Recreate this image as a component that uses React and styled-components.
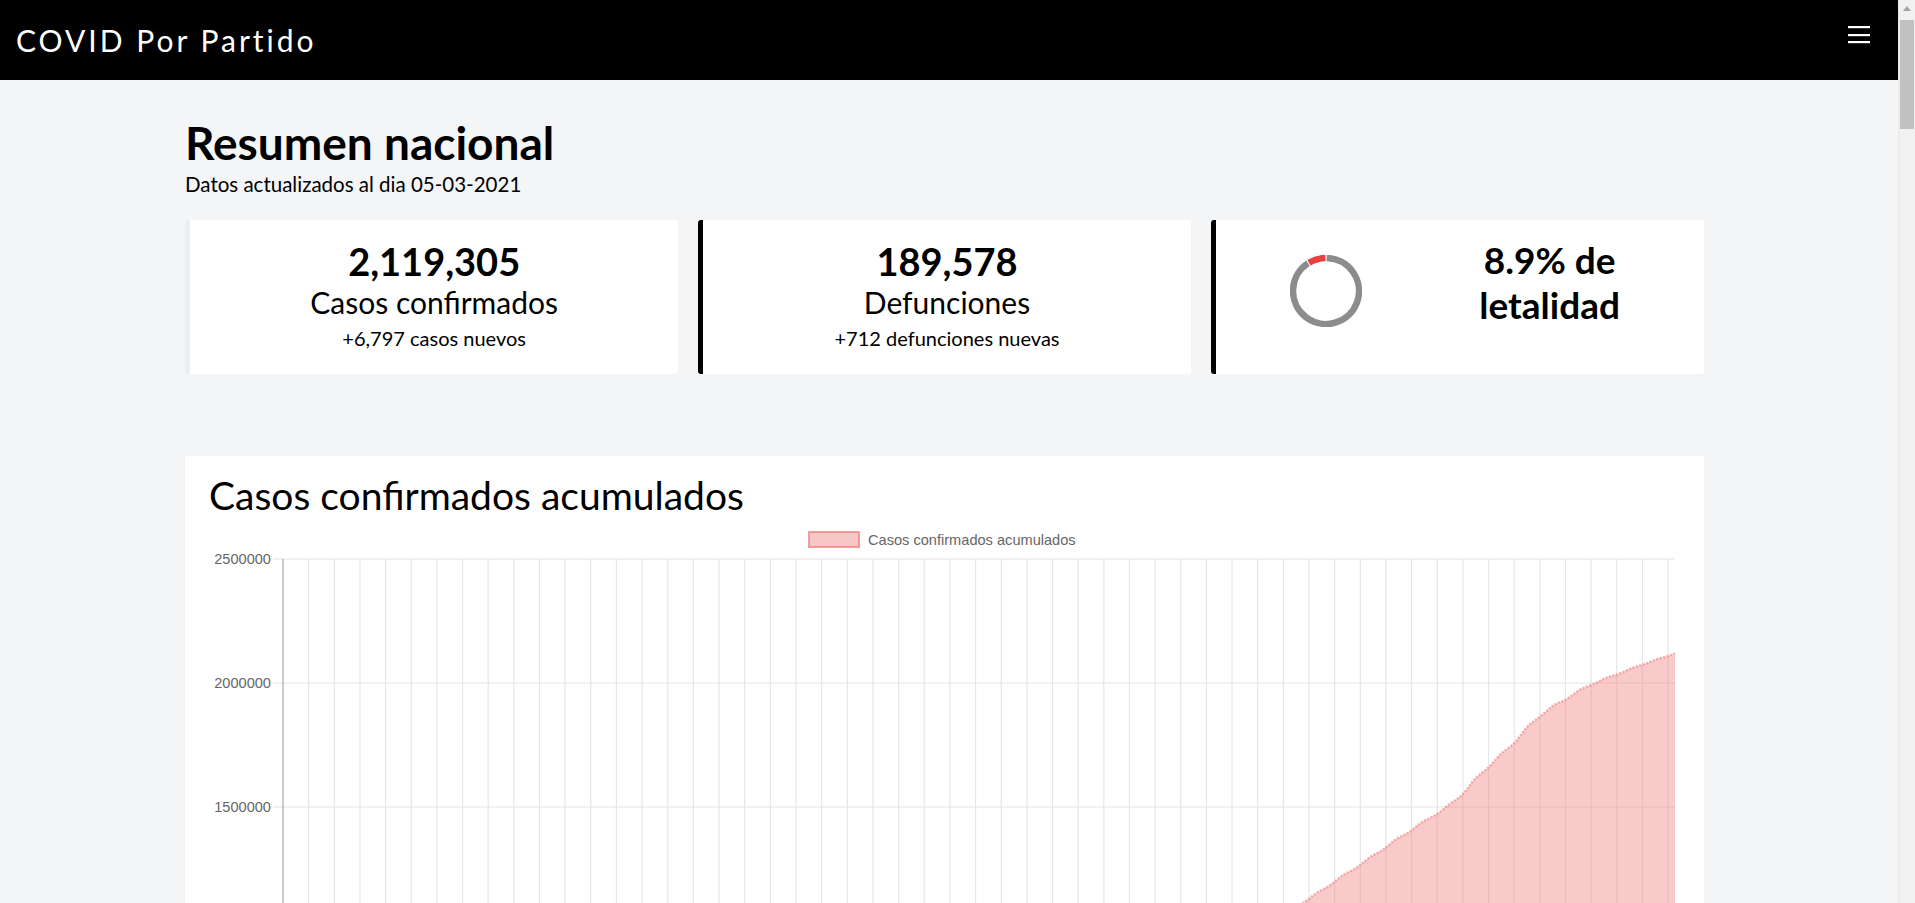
import React from "react";
import styled, { createGlobalStyle } from "styled-components";

const GlobalStyle = createGlobalStyle`
  html, body { margin: 0; padding: 0; }
  body {
    background: #f4f5f7;
    font-family: "Lato", "Open Sans", sans-serif;
    color: #000;
    padding-right: 17px;
  }
  * { box-sizing: border-box; }
`;

const ScrollTrack = styled.div`
  position: fixed;
  top: 0;
  right: 0;
  width: 17px;
  height: 100vh;
  background: #f1f1f1;
  border-left: 1px solid #e8e8e8;
  z-index: 10;
`;

const ScrollArrow = styled.div`
  width: 0;
  height: 0;
  margin: 6px auto 0;
  border-left: 4px solid transparent;
  border-right: 4px solid transparent;
  border-bottom: 5px solid #a3a3a3;
`;

const ScrollThumb = styled.div`
  margin: 9px 1px 0 1px;
  height: 109px;
  background: #c1c1c1;
`;

const NavBar = styled.nav`
  height: 80px;
  background: #000;
  display: flex;
  align-items: center;
  justify-content: space-between;
  padding: 0 28px 0 16px;
`;

const Brand = styled.a`
  color: #fff;
  font-size: 30px;
  font-weight: 400;
  letter-spacing: 3px;
  text-decoration: none;
`;

const Toggler = styled.button`
  background: none;
  border: 0;
  padding: 0;
  width: 22px;
  height: 30px;
  display: block;
  cursor: pointer;
`;

const Main = styled.main`
  width: 1519px;
  margin: 0 0 0 calc(50% - 764px);
  padding: 36px 0 60px;
`;

const Title = styled.h1`
  margin: 0;
  font-size: 46px;
  line-height: 54px;
  font-weight: 700;
  letter-spacing: 0;
`;

const Subtitle = styled.p`
  margin: 2px 0 0;
  font-size: 20.5px;
  line-height: 24px;
`;

const CardGrid = styled.section`
  display: grid;
  grid-template-columns: repeat(3, 1fr);
  gap: 19.5px;
  margin-top: 24px;
`;

const StatCard = styled.div`
  background: #fff;
  border-left: 5px solid ${(p) => p.$accent};
  border-radius: 3px;
  padding: 19px 12px;
  text-align: center;
  min-height: 154px;
`;

const BigNumber = styled.div`
  font-size: 38px;
  line-height: 44px;
  font-weight: 700;
`;

const StatLabel = styled.div`
  font-size: 30px;
  line-height: 38px;
`;

const StatSub = styled.div`
  font-size: 20px;
  line-height: 34px;
`;

const RateCard = styled.div`
  background: #fff;
  border-left: 5px solid #000;
  border-radius: 3px;
  padding: 17px 40px 17px 0;
  display: grid;
  grid-template-columns: 220px 228px;
  align-items: start;
`;

const DonutBox = styled.div`
  display: flex;
  justify-content: center;
  margin-top: 18px;
`;

const RateText = styled.div`
  font-size: 37px;
  line-height: 45px;
  font-weight: 700;
  text-align: center;
`;

const ChartCard = styled.section`
  background: #fff;
  margin-top: 82px;
  padding: 16px 24px 30px;
`;

const ChartTitle = styled.h2`
  margin: 0;
  font-size: 39px;
  line-height: 46px;
  font-weight: 400;
`;

const ChartSvg = styled.svg`
  display: block;
  margin-top: 6px;
`;

function Hamburger() {
  return (
    <svg width="22" height="30" viewBox="0 0 22 30">
      <rect x="0" y="1" width="22" height="2.2" fill="#fff" />
      <rect x="0" y="9" width="22" height="2.2" fill="#fff" />
      <rect x="0" y="16" width="22" height="2.2" fill="#fff" />
    </svg>
  );
}

function polar(cx, cy, r, deg) {
  const a = (deg * Math.PI) / 180;
  return [cx + r * Math.sin(a), cy - r * Math.cos(a)];
}

function arc(cx, cy, r, a0, a1) {
  const [x0, y0] = polar(cx, cy, r, a0);
  const [x1, y1] = polar(cx, cy, r, a1);
  const large = a1 - a0 > 180 ? 1 : 0;
  return `M${x0.toFixed(2)},${y0.toFixed(2)} A${r},${r} 0 ${large} 1 ${x1.toFixed(2)},${y1.toFixed(2)}`;
}

function Donut({ pct }) {
  const redStart = 360 - pct * 3.6;
  return (
    <svg width="72" height="72" viewBox="0 0 72 72">
      <path d={arc(36, 36, 33, 1, redStart - 1)} stroke="#8c8c8c" strokeWidth="6.5" fill="none" />
      <path d={arc(36, 36, 33, redStart + 1, 359)} stroke="#e8403e" strokeWidth="6.5" fill="none" />
    </svg>
  );
}

const controls = [
  [0, 0], [33, 1200], [63, 20000], [94, 93000], [124, 232000], [155, 425000],
  [186, 600000], [216, 743000], [247, 930000], [272, 1121000], [280, 1205600],
  [287, 1274000], [295, 1358900], [301, 1419000], [308, 1488000], [311, 1508000],
  [316, 1596800], [321, 1677000], [325, 1722000], [329, 1790000], [335, 1891000],
  [339, 1911000], [343, 1960000], [349, 2004000], [356, 2044000], [363, 2085000],
  [369, 2113000], [370, 2119305],
];

function base(d) {
  for (let i = 0; i < controls.length - 1; i++) {
    const [d0, v0] = controls[i];
    const [d1, v1] = controls[i + 1];
    if (d >= d0 && d <= d1) {
      return v0 + ((v1 - v0) * (d - d0)) / (d1 - d0);
    }
  }
  return controls[controls.length - 1][1];
}

const DAYS = 371;
const smooth = Array.from({ length: DAYS }, (_, d) => {
  let s = 0;
  let n = 0;
  for (let k = -4; k <= 4; k++) {
    const j = Math.min(370, Math.max(0, d + k));
    s += base(j);
    n++;
  }
  return d > 366 ? base(d) : s / n;
});
const data = smooth.map((v, d) => {
  const slope = smooth[Math.min(d + 1, 370)] - smooth[d];
  return d > 366 ? v : v + 0.3 * slope * Math.sin((2 * Math.PI * d) / 7);
});

const AX = 74;
const AR = 1466;
const TOP = 35;
const ZERO = 655;
const MAXV = 2500000;

function yOf(v) {
  return ZERO - (v / MAXV) * (ZERO - TOP);
}

function Chart() {
  const pts = data.map((v, d) => [AX + (d * (AR - AX)) / (DAYS - 1), yOf(v)]);
  const line = pts.map(([x, y]) => `${x.toFixed(2)},${y.toFixed(2)}`).join(" ");
  const area = `M${AX},${ZERO} L${line.split(" ").join(" L")} L${AR},${ZERO} Z`;
  const ticks = [2500000, 2000000, 1500000, 1000000, 500000, 0];
  const vlines = Array.from({ length: 54 }, (_, k) => AX + (k + 1) * 25.65);
  return (
    <ChartSvg width="1471" height="760" viewBox="0 0 1471 760">
      <rect x="600" y="8" width="50" height="15" fill="rgba(240,128,128,0.45)" stroke="rgba(240,128,128,0.75)" strokeWidth="2" />
      <text x="659" y="20.5" fontFamily="'Liberation Sans', Arial, sans-serif" fontSize="14.6" fill="#666">
        Casos confirmados acumulados
      </text>
      {vlines.map((x) => (
        <line key={x} x1={x} x2={x} y1={TOP} y2={ZERO + 10} stroke="#e6e6e6" strokeWidth="1.2" />
      ))}
      {ticks.map((t) => (
        <g key={t}>
          <line x1={AX - 10} x2={AR} y1={yOf(t)} y2={yOf(t)} stroke={t === 0 ? "#b5b5b5" : "#e4e4e4"} strokeWidth="1.2" />
          <text x="62" y={yOf(t) + 5} textAnchor="end" fontFamily="'Liberation Sans', Arial, sans-serif" fontSize="14.6" fill="#666">
            {t}
          </text>
        </g>
      ))}
      <line x1={AX} x2={AX} y1={TOP} y2={ZERO + 10} stroke="#b0b0b0" strokeWidth="1.3" />
      <path d={area} fill="rgba(240,128,128,0.42)" />
      <polyline points={line} fill="none" stroke="rgba(240,128,128,0.6)" strokeWidth="2.4" strokeDasharray="2.2 1.4" />
    </ChartSvg>
  );
}

export default function App() {
  return (
    <>
      <GlobalStyle />
      <NavBar>
        <Brand href="#">COVID Por Partido</Brand>
        <Toggler aria-label="Menú">
          <Hamburger />
        </Toggler>
      </NavBar>
      <Main>
        <Title>Resumen nacional</Title>
        <Subtitle>Datos actualizados al dia 05-03-2021</Subtitle>
        <CardGrid>
          <StatCard $accent="#eceef0">
            <BigNumber>2,119,305</BigNumber>
            <StatLabel>Casos confirmados</StatLabel>
            <StatSub>+6,797 casos nuevos</StatSub>
          </StatCard>
          <StatCard $accent="#000">
            <BigNumber>189,578</BigNumber>
            <StatLabel>Defunciones</StatLabel>
            <StatSub>+712 defunciones nuevas</StatSub>
          </StatCard>
          <RateCard>
            <DonutBox>
              <Donut pct={8.9} />
            </DonutBox>
            <RateText>
              8.9% de
              <br />
              letalidad
            </RateText>
          </RateCard>
        </CardGrid>
        <ChartCard>
          <ChartTitle>Casos confirmados acumulados</ChartTitle>
          <Chart />
        </ChartCard>
      </Main>
      <ScrollTrack>
        <ScrollArrow />
        <ScrollThumb />
      </ScrollTrack>
    </>
  );
}
